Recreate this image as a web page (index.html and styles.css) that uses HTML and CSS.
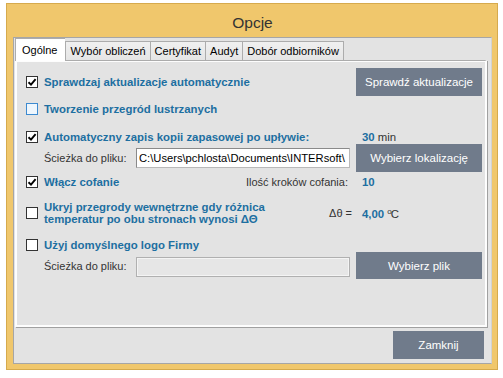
FILE: index.html
```html
<!DOCTYPE html>
<html lang="pl">
<head>
<meta charset="utf-8">
<title>Opcje</title>
<link rel="stylesheet" href="styles.css">
</head>
<body>
<div class="window">
  <div class="title">Opcje</div>
  <div class="body">
    <div class="tabs">
      <div class="tab active">Ogólne</div>
      <div class="tab">Wybór obliczeń</div>
      <div class="tab">Certyfikat</div>
      <div class="tab">Audyt</div>
      <div class="tab last">Dobór odbiorników</div>
    </div>
    <div class="panel">
      <div class="row r1">
        <span class="box"><svg viewBox="0 0 10 10" width="10" height="10"><path d="M1.5 5.2 L4 7.6 L8.6 2.2" fill="none" stroke="#000" stroke-width="1.9"/></svg></span>
        <span class="lbl">Sprawdzaj aktualizacje automatycznie</span>
        <button class="btn push">Sprawdź aktualizacje</button>
      </div>
      <div class="row r2">
        <span class="box hover"></span>
        <span class="lbl">Tworzenie przegród lustrzanych</span>
      </div>
      <div class="row r3">
        <span class="box"><svg viewBox="0 0 10 10" width="10" height="10"><path d="M1.5 5.2 L4 7.6 L8.6 2.2" fill="none" stroke="#000" stroke-width="1.9"/></svg></span>
        <span class="lbl">Automatyczny zapis kopii zapasowej po upływie:</span>
        <span class="value push"><b>30</b> min</span>
      </div>
      <div class="row r4">
        <span class="cap path">Ścieżka do pliku:</span>
        <span class="field"><span class="fieldtext">C:\Users\pchlosta\Documents\INTERsoft\</span></span>
        <button class="btn">Wybierz lokalizację</button>
      </div>
      <div class="row r5">
        <span class="box"><svg viewBox="0 0 10 10" width="10" height="10"><path d="M1.5 5.2 L4 7.6 L8.6 2.2" fill="none" stroke="#000" stroke-width="1.9"/></svg></span>
        <span class="lbl">Włącz cofanie</span>
        <span class="cap push">Ilość kroków cofania:</span>
        <span class="value"><b>10</b></span>
      </div>
      <div class="row r6">
        <span class="box"></span>
        <span class="lbl two">Ukryj przegrody wewnętrzne gdy różnica<br>temperatur po obu stronach wynosi ΔΘ</span>
        <span class="cap push">Δθ =</span>
        <span class="value"><b>4,00</b> <span class="deg">o</span>C</span>
      </div>
      <div class="row r7">
        <span class="box"></span>
        <span class="lbl">Użyj domyślnego logo Firmy</span>
      </div>
      <div class="row r8">
        <span class="cap path">Ścieżka do pliku:</span>
        <span class="field disabled"></span>
        <button class="btn">Wybierz plik</button>
      </div>
    </div>
    <div class="footer">
      <button class="btn close">Zamknij</button>
    </div>
  </div>
</div>
</body>
</html>
```

FILE: styles.css
```css
html, body {
  margin: 0;
  padding: 0;
  background: #ffffff;
}
body {
  font-family: "Liberation Sans", Arial, sans-serif;
  font-size: 11px;
  color: #2b2b2b;
}
.window {
  box-sizing: border-box;
  margin: 3px 0 0 6px;
  width: 492px;
  height: 367px;
  background: #f0c76c;
  border: 1px solid #d6aa4d;
  padding: 0 5px 5px 6px;
  display: flex;
  flex-direction: column;
}
.title {
  height: 33px;
  box-sizing: border-box;
  padding-top: 4px;
  line-height: 30px;
  text-align: center;
  font-size: 15.5px;
  color: #333;
}
.body {
  flex: 1;
  box-sizing: border-box;
  background: #e3e3e3;
  border: 1px solid #a6a6a6;
  border-right-color: #d2d2d2;
  padding: 0 0 0 1px;
  display: flex;
  flex-direction: column;
}
.tabs {
  height: 22px;
  display: flex;
  align-items: flex-end;
  position: relative;
  z-index: 2;
}
.tab {
  box-sizing: border-box;
  height: 19px;
  line-height: 18px;
  padding: 0 4px;
  border: 1px solid #acacac;
  border-right: none;
  border-bottom: none;
  background: linear-gradient(#f0f0f0, #e5e5e5);
  color: #000;
  font-size: 11px;
  white-space: nowrap;
}
.tab.last {
  border-right: 1px solid #acacac;
}
.tab.active {
  height: 23px;
  margin-bottom: -1px;
  line-height: 22px;
  background: #ffffff;
  padding: 0 8px 0 6px;
}
.panel {
  box-sizing: border-box;
  width: 472px;
  height: 267px;
  background: #e3e3e3;
  border: 2px solid #fdfdfd;
  border-top: 1px solid #acacac;
  box-shadow: 1px 1px 0 #a0a0a0, inset 0 1px 0 #fdfdfd;
  padding: 7px 3px 0 9px;
}
.row {
  display: flex;
  align-items: center;
}
.r1 { height: 28px; }
.r2 { height: 26px; }
.r3 { height: 22px; align-items: flex-end; }
.r4 { height: 28px; }
.r5 { height: 20px; }
.r6 { height: 42px; }
.r7 { height: 18px; align-items: flex-end; }
.r8 { height: 27px; }
.push { margin-left: auto; }
.box {
  box-sizing: border-box;
  width: 12px;
  height: 12px;
  flex: none;
  border: 1px solid #333;
  background: #fff;
  display: flex;
  align-items: center;
  justify-content: center;
  margin-right: 6px;
}
.r3 .box, .r7 .box { margin-bottom: 1px; }
.box.hover {
  border-color: #3d8ad0;
  background: #eef6fd;
}
.lbl {
  font-weight: bold;
  font-size: 11.4px;
  line-height: 14px;
  color: #1d6fa1;
  white-space: nowrap;
}
.lbl.two { line-height: 12.5px; }
.cap {
  color: #333;
  font-size: 11px;
  line-height: 14px;
  white-space: nowrap;
}
.cap.path {
  width: 92px;
  margin-left: 18px;
}
.r6 .cap { margin-right: -4px; }
.value {
  width: 120px;
  margin-left: 14px;
  line-height: 14px;
  font-size: 11.4px;
  color: #333;
  white-space: nowrap;
}
.r3 .value { margin-left: auto; }
.value b {
  color: #1d6fa1;
}
.deg {
  font-size: 8px;
  vertical-align: 4px;
  margin-right: -1px;
}
.field {
  box-sizing: border-box;
  width: 214px;
  height: 20px;
  border: 1px solid #8a8a8a;
  border-right-color: #b9b9b9;
  border-bottom-color: #b9b9b9;
  box-shadow: inset 0 0 0 1px #ffffff;
  background: #fff;
  color: #000;
  font-size: 11.2px;
  line-height: 18px;
  padding-left: 2px;
  overflow: hidden;
  white-space: nowrap;
  margin-right: 6px;
  flex: none;
}
.fieldtext {
  display: block;
  overflow: hidden;
}
.field.disabled {
  background: #e6e6e6;
  border-color: #b0b0b0;
  box-shadow: inset 0 0 0 1px #f4f4f4;
  margin-top: 3px;
}
.btn {
  box-sizing: border-box;
  width: 126px;
  height: 28px;
  border: none;
  background: #707b8b;
  color: #ffffff;
  font-family: "Liberation Sans", Arial, sans-serif;
  font-size: 11.5px;
  padding: 0;
  flex: none;
}
.r8 .btn { height: 27px; }
.footer {
  flex: 1;
  display: flex;
  justify-content: flex-end;
  align-items: flex-start;
  padding: 4px 7px 0 0;
}
.btn.close {
  width: 91px;
}
```
